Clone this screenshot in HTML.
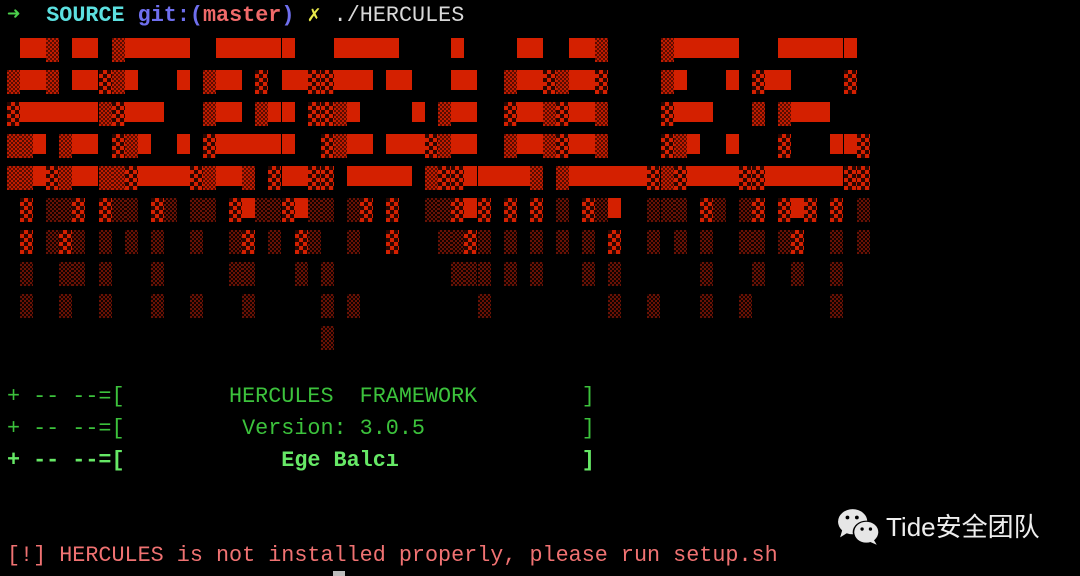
<!DOCTYPE html>
<html><head><meta charset="utf-8">
<style>
html,body{margin:0;padding:0;background:#000;}
body{width:1080px;height:576px;position:relative;overflow:hidden;font-family:"Liberation Mono","DejaVu Sans Mono",monospace;font-size:21.78px;}
.l{position:absolute;left:7px;height:32px;line-height:32px;white-space:pre;}
.c{position:absolute;width:13.07px;}
.h{background:#d42000;height:20px;}
.x{height:24px;background:repeating-conic-gradient(#d42000 0 25%,#2a0500 0 50%) 0 0/8px 8px;}
.s{height:24px;background:repeating-conic-gradient(#c01c00 0 25%,#5a0c00 0 50%) 0 0/4px 4px;}
.d{height:24px;background:repeating-conic-gradient(#6a1205 0 25%,#120200 0 50%) 0 0/4px 4px;}
.g{color:#3cc23c;}
.gb{color:#66e866;font-weight:bold;}
</style></head><body>
<div class="l" style="top:0"><span style="color:#4cd04c;font-weight:bold">➜</span>  <span style="color:#5ce0e0;font-weight:bold">SOURCE</span> <span style="color:#6f6fee;font-weight:bold">git:(</span><span style="color:#f06a6a;font-weight:bold">master</span><span style="color:#6f6fee;font-weight:bold">)</span> <span style="color:#e8e84a;font-weight:bold">✗</span> <span style="color:#d8d8d8">./HERCULES</span></div>
<div id="art"></div>
<div class="l g" style="top:381px">+ -- --=[        HERCULES  FRAMEWORK        ]</div>
<div class="l g" style="top:413px">+ -- --=[         Version: 3.0.5            ]</div>
<div class="l gb" style="top:445px">+ -- --=[            Ege Balcı              ]</div>
<div class="l" style="top:540px;color:#f07272">[!] HERCULES is not installed properly, please run setup.sh</div>
<div style="position:absolute;left:333px;top:571px;width:12px;height:5px;background:#bbb"></div>
<svg style="position:absolute;left:837px;top:507px" width="46" height="42" viewBox="0 0 44 40">
<ellipse cx="15" cy="14" rx="14" ry="12" fill="#e6e6e6"/>
<path d="M5 22 L3 29 L11 24Z" fill="#e6e6e6"/>
<ellipse cx="28" cy="24" rx="13" ry="11" fill="#000"/>
<ellipse cx="28" cy="24" rx="11.5" ry="10" fill="#e6e6e6"/>
<path d="M35 31 L38 36 L31 33Z" fill="#e6e6e6"/>
<circle cx="10" cy="10" r="1.8" fill="#000"/><circle cx="19" cy="10" r="1.8" fill="#000"/>
<circle cx="24" cy="21" r="1.6" fill="#000"/><circle cx="32" cy="21" r="1.6" fill="#000"/>
</svg>
<div style="position:absolute;left:886px;top:511px;color:#eee;font-family:'Liberation Sans','Noto Sans CJK SC',sans-serif;font-size:26px;line-height:32px;white-space:nowrap">Tide安全团队</div>
<script>
var rows=[
{"#":[1,2,5,6,9,10,11,12,13,16,17,18,19,20,21,25,26,27,28,29,34,39,40,43,44,51,52,53,54,55,59,60,61,62,63,64],s:[3,8,45,50]},
{"#":[1,2,5,6,9,13,16,17,21,22,25,26,27,29,30,34,35,39,40,43,44,51,55,58,59],s:[0,3,8,15,38,42,50],x:[7,19,23,24,41,45,57,64]},
{"#":[1,2,3,4,5,6,9,10,11,16,17,20,21,26,31,34,35,39,40,43,44,51,52,53,60,61,62],s:[7,15,19,25,33,41,45,57,59],x:[0,8,23,24,38,42,50]},
{"#":[2,5,6,10,13,16,17,18,19,20,21,26,27,29,30,31,34,35,39,40,43,44,52,55,63,64],s:[0,1,4,9,25,33,38,41,45,51],x:[8,15,24,32,42,50,59,65]},
{"#":[2,5,6,10,11,12,13,16,17,21,22,26,27,28,29,30,35,36,37,38,39,43,44,45,46,47,48,52,53,54,55,58,59,60,61,62,63],s:[0,1,4,7,8,15,18,32,40,42,50],x:[3,9,14,20,23,24,33,34,49,51,56,57,64,65]},
{"#":[18,22,35,46,60],x:[1,5,7,11,17,21,27,29,34,36,38,40,44,53,57,59,61,63],d:[3,4,8,9,12,14,15,19,20,23,24,26,32,33,42,45,49,50,51,54,56,65]},
{x:[1,4,18,22,29,35,46,60],d:[3,5,7,9,11,14,17,20,23,26,33,34,36,38,40,42,44,49,51,53,56,57,59,63,65]},
{d:[1,4,5,7,11,17,18,22,24,34,35,36,38,40,44,46,53,57,60,63]},
{d:[1,4,7,11,14,18,24,26,36,46,49,53,56,63]},
{d:[24]}
];
var h="";
rows.forEach(function(r,i){for(var k in r){r[k].forEach(function(c){
var t=38+32*i;h+='<div class="c '+(k=="#"?"h":k)+'" style="left:'+(7+c*13.07).toFixed(1)+'px;top:'+t+'px"></div>';});}});
document.getElementById("art").innerHTML=h;
</script>
</body></html>
